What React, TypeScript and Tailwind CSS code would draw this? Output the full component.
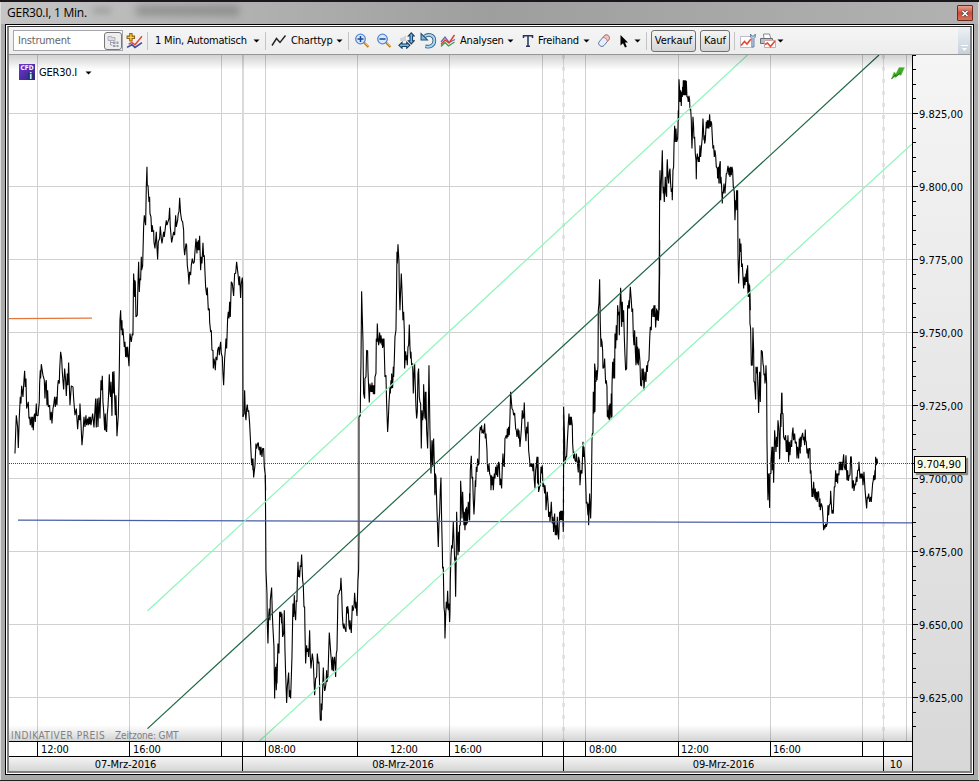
import type { ReactNode } from "react"

const GRID_Y = [113, 186, 259, 332, 405, 478, 551, 624, 697]
const GRID_X = [37, 129, 221, 265, 357, 449, 542, 585, 678, 770, 862, 906]
const PRICES = ["9.825,00", "9.800,00", "9.775,00", "9.750,00", "9.725,00", "9.700,00", "9.675,00", "9.650,00", "9.625,00"]

// price trace, split in blocks: origin in px, points in thirds of a px
const TRACE = [
  {
    x: 0, y: 150,
    points: "44,910 46,850 48,795 52,830 54,893 57,800 60,740 62,760 64,707 68,740 71,690 73,662 75,710 77,685 79,775 84,755 86,805 88,800 90,825 93,800 95,832 97,800 99,840 101,800 103,790 105,815 108,760 109,795 113,797 117,755 118,700 120,660 121,685 123,642 128,675 132,690 134,745 136,700 138,690 140,765 142,720 144,770 148,765 150,810 153,785 155,820 158,775 160,765 163,740 165,770 168,740 170,765 172,710 174,690 177,700 178,660 181,605 184,625 186,665 190,718 193,655 196,690 198,737 201,670 203,705 205,637 207,700 209,765 213,707 218,710 220,745 224,795 228,775 232,837 235,795 238,810 239,760 242,820 245,885 248,850 251,800 254,830 257,795 259,825 262,805 264,825 266,800 268,822 270,800 272,825 274,810 277,790 281,832 284,780 286,745 288,832 291,745 293,830 296,742 299,805 302,690 304,720 306,677 308,755 310,780 313,840 315,790 317,840 319,845 321,790 323,770 325,730 327,672 329,725 331,740 332,695 335,797 337,665 339,730 341,663 343,740 345,795 347,735 350,858 354,795 357,660 359,510 361,480 363,540 365,510 366,555 368,535 372,590 374,575 376,620 378,590 380,622 382,590 384,620 386,648 389,550 393,575 396,550 398,555 399,450 400,370 403,440 403,390 405,395 407,500 411,495 413,400 415,335 417,425 419,385 421,390 423,320 424,360 427,347 430,230 432,195 436,225 438,110 440,50 441,105 443,105 446,155 448,140 449,190 452,200 454,245 456,225 458,245 460,240 461,275 464,295 468,245 470,290 472,328 474,275 478,265 480,228 483,265 485,280 490,245 492,260 496,225 498,210 500,225 503,215 506,205 508,173 510,230 514,277 520,245 523,255 526,195 528,230 532,210 534,190 536,185 538,143 541,190 544,210 547,215 550,240 551,290 553,315 557,280 559,285 561,345 564,370 566,403 568,365 571,375 573,345 576,325 579,340 582,335 584,305 587,265 590,310 591,275 594,300 594,270 596,300 598,257 601,360 603,320 605,340 608,278 610,320 612,315 614,365 616,410 619,435 621,412 624,480 627,475 628,515 631,545 633,540 635,600 638,600 639,655 641,625 643,635 645,660 647,620 650,630 652,600 655,590 657,615 659,590 661,575 663,610 666,620 668,670 670,705 673,625 675,600 677,565 679,595 682,505 684,485 686,505 688,455 690,500 693,395 696,400 700,437 703,370 706,370 709,335 714,380 716,405 718,378 721,443 723,400 726,382 727,400 728,800",
  },
  {
    x: 230, y: 230,
    points: "38,560 41,550 43,480 45,550 47,570 49,535 51,523 53,545 55,540 58,580 60,620 64,705 66,685 68,720 68,685 70,742 74,705 77,640 79,655 82,640 84,637 86,660 88,650 90,675 92,650 95,680 97,655 100,655 102,710 105,735 106,780",
  },
  {
    x: 230, y: 470,
    points: "105,15 106,150 107,300 110,370 111,460 113,520 115,440 117,415 119,450 120,390 122,370 124,352 126,430 128,475 131,530 132,610 133,685 134,620 136,590 138,660 140,580 140,640 143,520 146,550 148,425 150,440 152,425 154,460 155,430 157,500 160,490 162,420 164,540 166,610 169,698 171,650 175,607 177,680 179,660 181,685 185,560 187,450 188,400 190,440 192,375 193,420 196,450 198,390 200,395 201,330 203,275 205,320 207,300 208,322 210,285 212,290 214,253 217,330 219,345 221,410 223,410 224,480 226,580 229,525 230,545 233,535 235,560 236,540 238,480 240,560 242,595 246,550 249,575 250,600 253,675 256,625 259,620 261,550 264,580 266,575 268,650 269,720 270,750 273,750 273,700 275,720 276,690 279,592 281,640 283,662 285,655 287,640 289,600 290,635 293,620 295,550 297,487 300,530 303,570 305,600 307,560 309,603 311,570 313,560 316,620 318,550 320,540 323,375 326,370 328,360 330,360 332,323 334,365 336,430 338,465 340,475 341,460 344,475 347,485 349,410 351,430 352,408 354,420 356,465 358,478 359,450 363,488 366,405 368,422 371,410 373,368 376,415 377,395 380,437 383,330 385,300 386,200 386,-160 388,-165",
  },
  {
    x: 230, y: 230,
    points: "388,560 390,555 391,450 392,400 394,183 396,260 398,330 399,430 400,490 403,505 404,445 407,440 409,360 412,362 413,420 415,470 417,517 419,460 420,485 422,465 424,485 425,457 427,485 428,465 429,492 431,465 433,492 434,440 437,430 438,325 440,335 441,280 443,325 445,345 448,307 450,340 452,315 455,345 455,325 457,353 459,325 461,350 461,325 464,440 467,435 469,520 472,605 474,570 476,520 479,470 480,490 482,450 484,475 484,430 487,473 489,410 490,440 492,390 494,320 497,300 499,160 500,65 501,100 503,42 506,95 507,175 509,240 511,180 513,130 516,205 518,270 520,245 522,300 523,415 526,363 528,390 529,375 531,405 533,350 535,345 537,283 539,350 541,385 542,365 544,405 547,400 549,490 551,430 553,400 555,470 557,530 559,565 561,545 563,430 565,415 567,500 569,515 571,520 573,655 575,540 577,570 579,555 580,462 582,525 584,565 585,485 587,570 587,485 589,600 592,655 594,550 596,405 597,475 599,600 601,690 602,730 605,630 607,705 609,635 610,625 612,700 613,740 614,790",
  },
  {
    x: 230, y: 470,
    points: "614,75 615,10 617,20 620,120 624,230 626,155 628,130 630,60 632,22 634,150 636,235 637,295 639,290 641,410 643,430 644,505 646,440 648,395 650,415 652,362 654,420 656,400 658,455 659,430 660,330 662,260 664,225 666,235 669,155 671,210 673,270 674,260 676,380 678,250 679,125 681,190 683,255 685,185 687,245 688,165 690,165 691,32 694,100 695,145 697,65 699,120 701,165 702,125 704,180 706,115 708,165 709,110 711,160 714,95 717,150 718,70",
  },
  {
    x: 420, y: 370,
    points: "148,370 148,450 150,300 153,257 155,325 157,320 159,390 161,433 163,390 165,330 166,350 168,290 170,305 172,265 174,285 176,280 178,190 180,170 182,180 184,165 185,190 187,178 190,190 193,160 195,205 197,190 200,240 201,280 203,305 206,280 208,310 211,320 212,360 214,315 216,345 218,320 219,360 222,310 224,325 226,290 229,315 230,283 232,320 235,275 237,280 239,345 241,325 244,355 246,290 248,250 250,285 252,290 254,205 256,200 258,195 260,205 261,175 263,200 265,170 267,195 269,140 271,65 273,90 275,115 278,120 280,135 283,128 286,175 288,180 290,200 293,175 295,205 296,180 299,230 303,180 306,120 308,145 310,140 312,97 314,170 317,213 319,170 321,190 323,155 325,240 328,270 329,290 332,280 334,290 336,280 338,303 340,280 342,330 344,355 346,300 348,285 350,260 352,340 353,260 355,365 358,350 360,345 362,290 364,310 366,285 368,350 370,340 373,370 374,345 376,365 377,420 379,390 381,365 384,410 385,440 388,425 389,455 391,430 393,395 396,460 398,440 400,485 403,430 405,495 407,465 409,495 411,440 413,490 415,508 418,425 420,450 421,422 423,450 424,422 426,450 427,422 429,485 430,250 430,110 433,210 434,280 437,260 439,260 441,215 444,160 446,130 448,165 450,140 452,165 453,140 456,165 457,220 460,265 462,245 464,270 467,275 468,250 471,275 474,307 475,260 478,275 479,345 482,300 485,310 488,215 490,260 491,230 494,275 496,330 498,400 500,395 503,435 504,400 505,465 508,370 511,445 513,380 515,210 516,190 518,190 519,65 521,130 522,65 524,125 525,30",
  },
  {
    x: 540, y: 240,
    points: "162,515 163,370 165,390 167,425 169,390 170,420 173,380 174,210 176,190 178,117 180,250 182,320 183,295 185,305 187,330 188,385 191,380 193,355 195,405 196,430 198,420 200,440 201,530 203,510 204,535 206,495 207,540 209,490 212,535 213,460 215,530 215,440 217,365 219,415 221,355 223,415 224,280 226,325 228,255 230,300 232,195 234,225 236,215 237,285 239,200 241,143 243,200 244,260 246,185 248,245 250,210 252,290 254,345 256,390 259,385 261,270 262,195 264,205 266,180 267,205 270,140 273,180 275,215 277,205 279,285 281,315 283,270 285,330 287,375 289,290 291,370 292,320 294,375 296,325 299,365 301,435 304,438 305,385 307,420 309,385 311,450 314,395 317,425 319,375 321,395 323,365 326,360 328,300 330,260 333,270 334,210 337,205 338,230 341,195 342,230 344,195 346,262 349,205 350,240 352,210 354,242 356,210 358,100 358,0",
  },
  {
    x: 640, y: 60,
    points: "56,750 57,590 58,400 59,330 61,420 64,340 66,270 68,380 69,400 70,380 72,425 75,350 77,400 79,410 80,320 81,297 83,350 85,370 87,335 89,325 91,370 93,395 95,385 96,420 98,330 100,320 101,260 103,197 105,245 107,205 109,245 112,235 113,205 114,150 115,180 116,57 118,90 119,125 121,90 123,137 124,95 126,110 127,80 128,105 129,60 131,105 132,60 134,105 135,60 137,105 138,62 140,110 142,110 144,125 146,107 148,120 149,150 151,145 153,180 154,235 155,265 158,170 160,200 161,235 163,230 165,280 167,300 168,357 169,300 171,280 174,305 176,290 177,305 179,255 181,290 183,265 186,230 188,175 191,240 192,225 193,250 195,240 198,185 199,205 201,180 203,205 204,180 206,205 207,180 208,162 210,200 212,183 214,190 216,230 218,265 220,255 222,290 224,270 226,285 228,320 231,325 232,355 234,320 236,370 237,320 240,303 240,370 242,350 244,380 246,430 247,395 249,400 251,370 254,400 256,370 258,340 260,340 263,317 266,345 267,322 269,350 271,320 273,345 275,320 277,330 279,380 282,395 284,480 286,420 287,450 289,390 291,450 292,390 293,580 295,670 298,580 298,535 300,575 302,550 304,620 306,610 308,650 310,685 312,650 314,675 317,640 317,665 319,630 320,665 322,615 324,700 326,670 327,710 328,675 330,750",
  },
  {
    x: 720, y: 240,
    points: "80,85 82,120 84,170 86,135 88,150 89,250 91,265 93,375 96,375 98,262 100,330 101,425 103,425 106,478 107,380 109,400 111,380 113,450 115,518 117,430 118,395 120,485 122,380 123,330 126,335 128,370 130,380 131,405 133,400 134,430 136,410 137,375 139,430 140,600 142,740 143,780 145,700 147,760 148,803 149,700 152,700 152,665 155,620 156,690 158,620 160,728 163,570 165,600 167,635 169,590 171,620 173,540 176,570 178,657 181,520 182,560 184,460 185,458 186,520 188,520 190,590 193,600 196,585 198,635 200,600 201,635 203,585 205,665 207,605 209,645 212,600 214,620 216,580 218,562 220,600 223,580 225,610 228,605 230,655 232,620 234,640 235,655 237,595 240,640 240,590 242,620 244,590 247,578 249,600 251,590 253,615 255,568 256,600 258,605 260,640 262,625 264,655 266,625 269,625 270,700 272,690 274,740 275,770 277,745 278,770 280,725 282,760 284,775 285,745 287,780 289,755 291,785 293,755 295,755 297,800 299,775 300,810 303,790 306,800 308,830 310,870 313,855 314,865 316,850 318,860 321,848 323,795 325,825 327,795 330,790 331,752 333,790 335,820 337,810 339,820 342,740 344,740 346,690 348,725 350,700 352,730 353,700 356,705 357,665 359,690 361,665 363,690 365,665 367,690 368,665 370,642 372,680 375,690 377,645 380,720 382,690 384,722 387,705 389,705 391,650 393,650 395,700 396,745 399,720 401,752 404,730 406,735 408,710 410,725 412,690 415,690 416,665 419,715 422,700 424,715 426,700 428,735 431,695 434,745 436,770 439,805 441,770 443,775 445,760 448,785 451,770 453,785 457,730 459,720 460,705 462,720 464,690 465,718 466,650 468,675 470,655 472,670",
  },
]

function Chart() {
  return (
    <svg className="block h-[686px] w-[903px] bg-white" viewBox="9 55 903 686">
      <defs>
        <linearGradient id="shadeTop" x1="0" y1="0" x2="0" y2="1">
          <stop offset="0" stopColor="#000" stopOpacity=".18" />
          <stop offset="1" stopColor="#000" stopOpacity="0" />
        </linearGradient>
        <linearGradient id="shadeBottom" x1="0" y1="0" x2="0" y2="1">
          <stop offset="0" stopColor="#000" stopOpacity="0" />
          <stop offset="1" stopColor="#000" stopOpacity=".17" />
        </linearGradient>
      </defs>
      <g stroke="#d0d0d0" shapeRendering="crispEdges">
        {GRID_Y.map(y => <line key={y} x1="9" x2="912" y1={y + 0.5} y2={y + 0.5} />)}
        {GRID_X.map(x => <line key={x} y1="55" y2="741" x1={x + 0.5} x2={x + 0.5} />)}
        <line x1="242.5" x2="242.5" y1="55" y2="741" strokeWidth="2" stroke="#dadada" />
        {[563, 883].map(x => (
          <g key={x}>
            <line x1={x + 0.5} x2={x + 0.5} y1="55" y2="741" stroke="#e6e6e6" strokeWidth="3" strokeDasharray="4 8" />
            <line x1={x + 0.5} x2={x + 0.5} y1="55" y2="741" stroke="#dedede" />
          </g>
        ))}
      </g>
      <g fill="none" stroke="#000" strokeWidth="3.3" strokeLinejoin="bevel">
        {TRACE.map((t, i) => (
          <polyline key={i} points={t.points} transform={`translate(${t.x + 0.3} ${t.y + 0.2}) scale(0.33333)`} />
        ))}
      </g>
      <line x1="9" y1="318.6" x2="92" y2="318.2" stroke="#e2763c" strokeWidth="1.3" />
      <line x1="18" y1="520.2" x2="912" y2="522.8" stroke="#4a5fa8" strokeWidth="1.2" />
      <g strokeWidth="1.2">
        <line x1="147.5" y1="611" x2="747.5" y2="55" stroke="#8df5bb" />
        <line x1="259.5" y1="741" x2="912" y2="144" stroke="#8df5bb" />
        <line x1="147.5" y1="728.6" x2="879" y2="55" stroke="#1e6545" />
      </g>
      <line x1="9" x2="912" y1="463.5" y2="463.5" stroke="#c01414" strokeDasharray="1 1" />
      <rect x="9" y="55" width="903" height="15" fill="url(#shadeTop)" />
      <rect x="9" y="725" width="903" height="16" fill="url(#shadeBottom)" />
      <path d="M891.500 79l2.500-7 2 1.500 3-6h5.500l-3.500 8-2-1-3.500 3-1.500-.5z" fill="#3fa827" stroke="#74c85c" strokeWidth=".5" />
      <path d="M891.500 79l3.500-4 1.500 1 4-3" stroke="#1d7510" fill="none" />
    </svg>
  )
}

const HOURS = [
  { w: 28, pad: "", label: "" },
  { w: 92, pad: "pl-[3px]", label: "12:00" },
  { w: 92, pad: "pl-[3px]", label: "16:00" },
  { w: 21, pad: "", label: "" },
  { w: 23, pad: "", label: "" },
  { w: 92, pad: "pl-[2px]", label: "08:00" },
  { w: 92, pad: "pl-[32px]", label: "12:00" },
  { w: 93, pad: "pl-[4px]", label: "16:00" },
  { w: 21, pad: "", label: "" },
  { w: 22, pad: "", label: "" },
  { w: 93, pad: "pl-[3px]", label: "08:00" },
  { w: 92, pad: "pl-[2px]", label: "12:00" },
  { w: 92, pad: "pl-[2px]", label: "16:00" },
  { w: 21, pad: "", label: "" },
  { w: 29, pad: "", label: "" },
]

const DAYS = [
  { w: 233, label: "07-Mrz-2016" },
  { w: 321, label: "08-Mrz-2016" },
  { w: 320, label: "09-Mrz-2016" },
  { w: 29, label: "10" },
]

function TimeAxis() {
  return (
    <div className="border-t border-black">
      <div className="flex h-[14px] bg-white">
        {HOURS.map((h, i) => (
          <div key={i} style={{ width: h.w }} className={`shrink-0 leading-[15px] tracking-[-0.15px] ${i ? "border-l border-black" : ""} ${h.pad}`}>
            {h.label}
          </div>
        ))}
      </div>
      <div className="flex h-[15px] border-t border-black bg-linear-to-b from-[#f4f4f4] to-[#d6d6d6]">
        {DAYS.map((d, i) => (
          <div key={i} style={{ width: d.w }} className={`shrink-0 text-center leading-[15px] tracking-[-0.1px] ${i ? "border-l border-black" : ""} ${d.label === "10" ? "pr-1" : ""}`}>
            {d.label}
          </div>
        ))}
      </div>
    </div>
  )
}

function PriceAxis() {
  const ticks = Array.from({ length: 47 }, (_, i) => Math.round(113 + (i - 4) * 14.6)).filter(y => y >= 55 && y <= 741)
  return (
    <div className="relative flex h-[716px] w-[58px] bg-linear-to-b from-[#f5f5f5] to-[#d8d8d8]">
      <svg className="h-[716px] w-[7px] shrink-0" viewBox="912 55 7 716" stroke="#000" shapeRendering="crispEdges">
        <line x1="912.5" x2="912.5" y1="55" y2="771" />
        {ticks.map(y => (
          <line key={y} x1="912" x2={GRID_Y.includes(y) ? 918 : 916} y1={y + 0.5} y2={y + 0.5} />
        ))}
      </svg>
      <div className="pt-[23px]">
        {PRICES.map(p => <div key={p} className="h-[73px] whitespace-nowrap leading-[73px]">{p}</div>)}
      </div>
      <div className="absolute top-[401px] left-[2px] h-[17px] w-[52px] border border-black bg-[#fbfbe3] pl-[2px] leading-[16px] whitespace-nowrap shadow-[2px_2px_1px_#888]">
        9.704,90
      </div>
    </div>
  )
}

function Caret({ className = "" }: { className?: string }) {
  return (
    <svg className={`mt-px h-[4px] w-[7px] shrink-0 ${className}`} viewBox="0 0 7 4"><path d="M0.500 0.500h6l-3 3z" /></svg>
  )
}

function Label({ children, className }: { children: ReactNode; className: string }) {
  return <span className={`shrink-0 pt-[2px] tracking-[-0.2px] whitespace-nowrap ${className}`}>{children}</span>
}

function Sep({ className = "" }: { className?: string }) {
  return <div className={`h-[18px] w-px shrink-0 bg-[#c4c4c4] ${className}`} />
}

function Icon({ children, className = "" }: { children: ReactNode; className?: string }) {
  return <svg className={`size-4 shrink-0 ${className}`} viewBox="0 0 16 16" fill="none">{children}</svg>
}

function Magnifier({ plus, className }: { plus?: boolean; className: string }) {
  return (
    <Icon className={className}>
      <path d="M9 9.500l4.500 4.500" stroke="#b87d28" strokeWidth="2.200" />
      <path d="M9.500 9.500l4 4" stroke="#f0ba55" />
      <circle cx="5.500" cy="6" r="4.800" fill="#d7e8ff" stroke="#5489d8" strokeWidth="1.300" />
      <path d={plus ? "M2.500 6h6M5.500 3v6" : "M2.500 6h6"} stroke="#1d438b" strokeWidth="1.500" />
    </Icon>
  )
}

function Toolbar() {
  return (
    <div className="flex h-[28px] items-center border-b border-[#969696] bg-linear-to-b from-[#f5f5f5] to-[#ededed] pl-[4px]">
      <div className="flex h-[21px] w-[110px] shrink-0 items-center justify-between border border-[#a6a6ad] bg-white pl-[4px]">
        <Label className="text-[#666]">Instrument</Label>
        <div className="flex h-[18px] w-[18px] items-center justify-center rounded-[3px] border border-[#777] bg-[#eee]">
          <Icon>
            <path d="M3 3.500h3.500v1H10v3H3z" fill="#dcdce2" stroke="#b0b0ba" />
            <path d="M5.500 8v4h2M5.500 9.500h3" stroke="#a0a4b4" />
            <path d="M8 8.500h2.500V11H8zM11.500 8.500h2V11h-2zM8 12h2.500v2H8zM11.500 12h2v2h-2z" fill="#979db2" />
          </Icon>
        </div>
      </div>
      <Icon className="ml-[3px] h-[18px] w-[17px]">
        <path d="M1 14l4.500-2.500 3 2.500L15 9.500" stroke="#3c4c9b" strokeWidth="1.500" />
        <path d="M2.500 11l3-1.500 3 2L15 3.500" stroke="#e34a31" strokeWidth="1.400" />
        <path d="M3.500 1h2.200v2.400H8v2.200H5.700V8H3.500V5.600H1V3.400h2.500z" fill="#ffd34e" stroke="#8e6213" />
      </Icon>
      <Sep className="ml-[4px]" />
      <Label className="ml-[7px] w-[98px]">1 Min, Automatisch</Label>
      <Caret />
      <Sep className="ml-[5px]" />
      <Icon className="ml-[5px]"><path d="M1 12.500l4.500-7L9 9.500l5.500-7" stroke="#222" strokeWidth="1.400" /></Icon>
      <Label className="ml-[4px] w-[45px]">Charttyp</Label>
      <Caret />
      <Sep className="ml-[5px]" />
      <Magnifier plus className="ml-[6px]" />
      <Magnifier className="ml-[6px]" />
      <Icon className="ml-[5px] h-[17px] w-[17px]">
        <path d="M2 5.500h5.500v3H2zM4 5.500l3.500-2.500v2.500z" fill="#cdd3d6" />
        <path d="M12.500 .8l2.800 3h-1.600v4.400h1.600l-2.800 3-2.800-3h1.600V3.800H9.700z" fill="#78b8dc" stroke="#163f66" />
        <path d="M.8 12.500l3-2.800v1.600h4.400V9.700l3 2.800-3 2.800v-1.600H3.800v1.600z" fill="#78b8dc" stroke="#163f66" />
      </Icon>
      <Icon className="ml-[5px] h-[17px] w-[17px]">
        <path d="M4 4.500C8 1 13.500 3 13.500 8S9 14.500 5 13.500" stroke="#315f83" strokeWidth="3.400" />
        <path d="M4 4.500C8 1 13.500 3 13.500 8S9 14.500 5 13.500" stroke="#a9d6ec" strokeWidth="1.800" />
        <path d="M1 1.500v6h6z" fill="#7fbcd9" stroke="#244f73" />
      </Icon>
      <Icon className="ml-[3px]">
        <path d="M1 13.500l4-4 3.500 3.500 6-4" stroke="#3e9a4c" strokeWidth="1.300" />
        <path d="M1 9l4-5 4 5.500 6-3" stroke="#6e64ab" strokeWidth="1.300" />
        <path d="M1 11.500l4-4.500 4 3 5.500-8" stroke="#e33b2d" strokeWidth="1.400" />
      </Icon>
      <Label className="ml-[4px] w-[47px]">Analysen</Label>
      <Caret />
      <Icon className="ml-[6px]"><path d="M3.500 5V2.800h9V5M8 3v10.500M6 13.300h4" stroke="#22355c" strokeWidth="1.500" /></Icon>
      <Label className="ml-[2px] w-[45px]">Freihand</Label>
      <Caret />
      <Icon className="ml-[6px]">
        <path d="M3 9l5-6c1-1.200 2.500-1.400 4-.5s2 2.700 1 4l-5 6c-1.200 1.200-2.700 1.200-4 .2S2 10.200 3 9z" fill="#e9edf5" stroke="#6278a8" />
        <path d="M8 3c1.500-1.500 3-1.300 4.300-.3 1.200 1 1.500 2.600.5 4L11.500 8.500C11 6 9 4.500 7 4.500z" fill="#f4c5bd" stroke="#c97870" />
      </Icon>
      <Icon className="ml-[4px]"><path d="M4.500 2v10.500l2.500-2.300 2 4.300 1.800-.8L9 9.500h3z" fill="#000" /></Icon>
      <Caret className="ml-[2px]" />
      <Sep className="ml-[5px]" />
      <button className="ml-[4px] h-[22px] w-[45px] shrink-0 rounded-[3px] border border-[#707070] bg-linear-to-b from-[#f5f5f5] to-[#d5d5d5] pt-[2px]">Verkauf</button>
      <button className="ml-[4px] h-[22px] w-[30px] shrink-0 rounded-[3px] border border-[#707070] bg-linear-to-b from-[#f5f5f5] to-[#d5d5d5] pt-[2px]">Kauf</button>
      <Sep className="ml-[4px]" />
      <Icon className="ml-[5px]">
        <path d="M.5 3.500h12v11h-12z" fill="#fff" stroke="#bbc" />
        <path d="M1 12.500l3.500-4L7 11l4-5" stroke="#e24a32" strokeWidth="1.600" />
        <path d="M10.500 1v3l1.300 1.500v8.500h2.200V5.500L15.300 4V1l-1.400 2h-2z" fill="#b8cde5" stroke="#557196" strokeWidth=".8" />
      </Icon>
      <Icon className="ml-[4px]">
        <path d="M3.500 1h6l1.500 5H4z" fill="#fff" stroke="#888" />
        <path d="M.5 5.500h12v5H.5z" fill="#b8bdc6" stroke="#666f7c" />
        <path d="M4.500 7.500h11v7h-11z" fill="#fff" stroke="#caa" />
        <path d="M5 11.500l2.500-1.500 3 3.500 4.500-5.500" stroke="#e24a32" strokeWidth="1.600" />
      </Icon>
      <Caret className="ml-px" />
      <div className="ml-auto flex h-[27px] w-[12px] items-end justify-center bg-linear-to-b from-[#eef2f6] to-[#c6d0dc] pb-[3px]">
        <svg className="h-[6px] w-[7px]" viewBox="0 0 7 6"><path d="M0 0h7v1H0zM1 3h5l-2.500 3z" fill="#fff" /></svg>
      </div>
    </div>
  )
}

function TitleBar() {
  return (
    <div className="relative flex h-[22px] items-center justify-between overflow-hidden bg-linear-to-r from-[#c5c5c5] via-[#9e9e9e] to-[#b2b2b2] pr-[5px] pl-[6px]">
      <div className="absolute top-[5px] left-[92px] h-[7px] w-[18px] bg-[#888] opacity-50 blur-[3px]" />
      <div className="absolute top-[4px] left-[135px] h-[9px] w-[103px] bg-[#6d6d6d] opacity-60 blur-[4px]" />
      <span className="relative font-['Open_Sans',sans-serif] text-[12px] tracking-[-0.25px]">GER30.I, 1 Min.</span>
      <div className="flex h-[16px] w-[16px] items-center justify-center rounded-[1px] border border-[#6a2a22] bg-linear-to-b from-[#e5a094] via-[#cb4c36] to-[#d97258]">
        <svg className="h-[7px] w-[8px]" viewBox="0 0 8 7"><path d="M1.500 1l5 5M6.500 1l-5 5" stroke="#444" strokeWidth="3" /><path d="M1.500 1l5 5M6.500 1l-5 5" stroke="#fff" strokeWidth="1.600" /></svg>
      </div>
    </div>
  )
}

export default function App() {
  return (
    <div className="h-[781px] w-[979px] overflow-hidden border-t-2 border-b border-t-[#1c171d] border-b-[#222] bg-[#aaa] font-['DejaVu_Sans_Condensed','DejaVu_Sans',sans-serif] text-[11px] text-black">
      <div className="h-[778px] border-x border-[#ddd]">
        <TitleBar />
        <div className="ml-[4px] h-[751px] w-[969px] border border-black bg-white p-px">
          <div className="h-[747px] w-[965px] border-t border-r-2 border-b-2 border-l-2 border-[#808080] border-t-[#333]">
            <Toolbar />
            <div className="flex">
              <div>
                <div className="relative">
                  <Chart />
                  <div className="absolute top-[8px] left-[10px] flex items-center">
                    <div className="relative h-[16px] w-[16px] bg-linear-to-br from-[#7137d6] to-[#312381] text-center text-[6.500px] leading-[9px] font-bold text-white">
                      CFD
                      <span className="absolute right-[1px] bottom-0 bg-[#27306f] px-[2px] text-[8px] leading-[7px]">i</span>
                    </div>
                    <Label className="ml-[4px] w-[46px]">GER30.I</Label>
                    <Caret />
                  </div>
                  <div className="absolute bottom-[-2px] left-[2px] flex text-[10px] leading-[14px] whitespace-nowrap text-[#808080]">
                    <span className="w-[104px] tracking-[0.55px]">INDIKATIVER PREIS</span>
                    <span className="tracking-[-0.15px]">Zeitzone: GMT</span>
                  </div>
                </div>
                <TimeAxis />
              </div>
              <PriceAxis />
            </div>
          </div>
        </div>
      </div>
    </div>
  )
}
